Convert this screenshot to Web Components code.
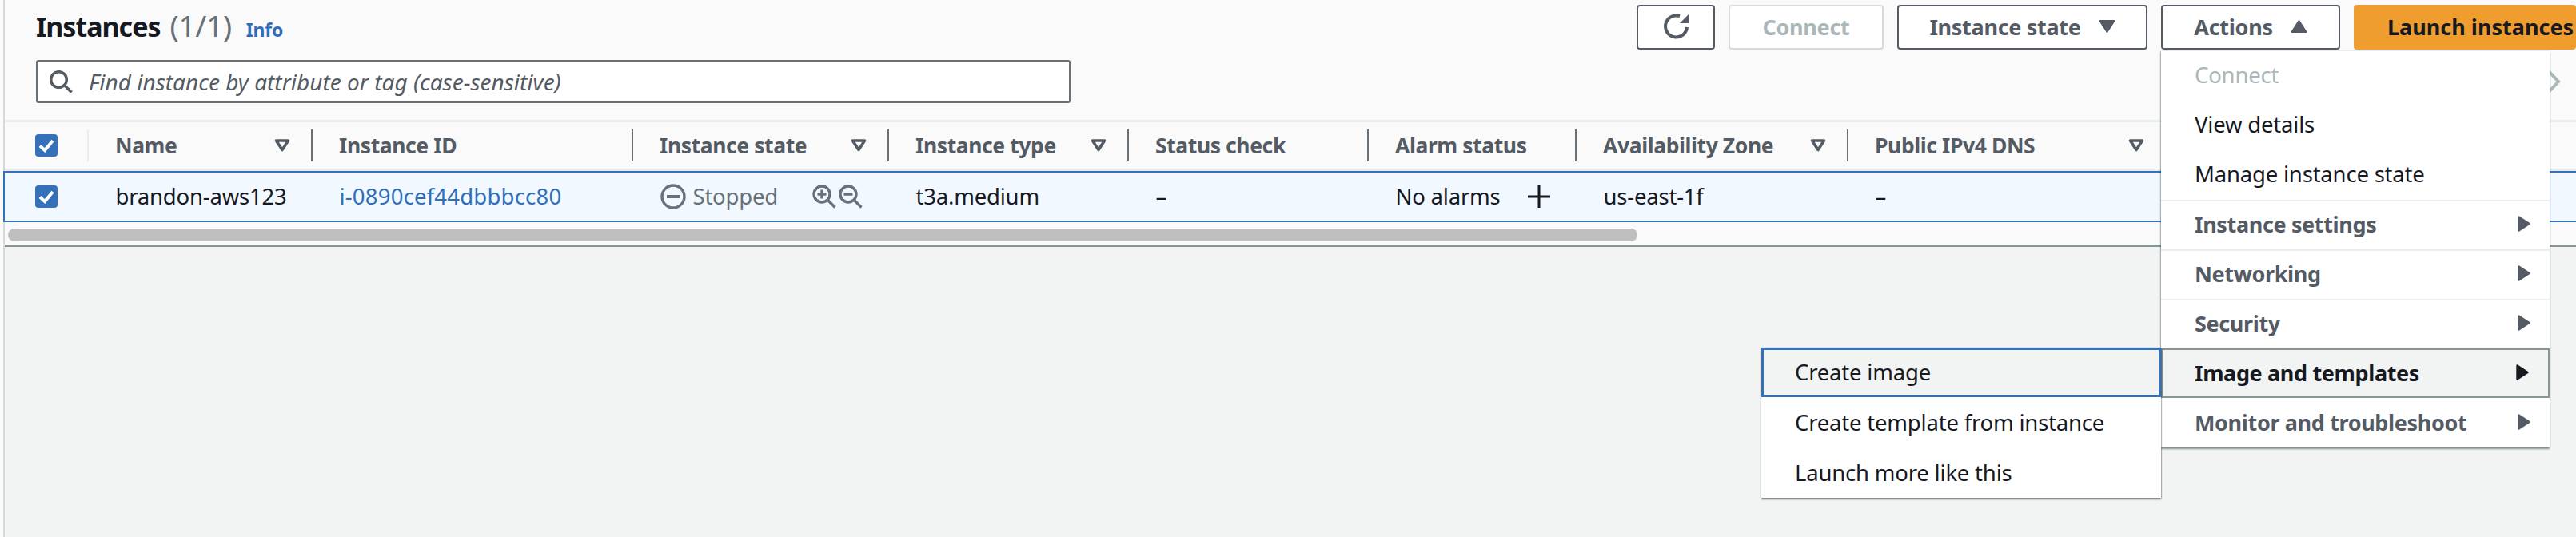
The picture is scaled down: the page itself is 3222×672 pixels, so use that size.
<!DOCTYPE html>
<html><head><meta charset="utf-8"><style>
html,body{margin:0;padding:0;width:3222px;height:672px;overflow:hidden;background:#f2f3f3;font-family:"Noto Sans",sans-serif;}
</style></head><body>
<aws-page></aws-page>
<script>
const FONT='"Noto Sans","Open Sans",sans-serif';
class Btn extends HTMLElement{constructor(){super();this.attachShadow({mode:'open'}).innerHTML=`<style>
:host{display:flex;align-items:center;justify-content:center;box-sizing:border-box;height:56px;padding-bottom:2px;border:2px solid #545b64;border-radius:4px;background:#fff;color:#545b64;font:700 27px/1 ${FONT};letter-spacing:-.3px;white-space:nowrap;gap:22px;flex:none}
:host([disabled]){border-color:#d5dbdb;color:#aab7b8}
:host([primary]){background:#f09d2f;border-color:#f09d2f;color:#16191f;justify-content:flex-start;padding-left:40px;letter-spacing:0}
</style><slot></slot>`}}
customElements.define('aws-btn',Btn);
class Check extends HTMLElement{constructor(){super();this.attachShadow({mode:'open'}).innerHTML=`<style>:host{display:block;width:28px;height:28px;flex:none}svg{display:block}</style>
<svg width="28" height="28" viewBox="0 0 28 28"><rect width="28" height="28" rx="4" fill="#3571b9"/><path d="M6 14.5l6 5.5L22 8" fill="none" stroke="#fff" stroke-width="4"/></svg>`}}
customElements.define('aws-check',Check);
class Head extends HTMLElement{constructor(){super();this.attachShadow({mode:'open'}).innerHTML=`<style>
:host{display:flex;align-items:center;box-sizing:border-box;height:40px;border-right:2px solid #687078;padding:0 26px 0 33px;color:#545b64;font:700 26.5px/40px ${FONT};letter-spacing:-.4px;white-space:nowrap;justify-content:space-between}
:host([last]){border-right:0}
svg{display:block;flex:none}
</style><slot></slot><svg id="s" width="20" height="16" viewBox="0 0 20 16"><path d="M2.5 2h15L10 13.5z" fill="none" stroke="#545b64" stroke-width="3.6" stroke-linejoin="round"/></svg>`;
if(this.hasAttribute('nosort'))this.shadowRoot.getElementById('s').remove()}}
customElements.define('aws-head',Head);
class Cell extends HTMLElement{constructor(){super();this.attachShadow({mode:'open'}).innerHTML=`<style>
:host{display:flex;align-items:center;padding-left:33.5px;color:#16191f;font:400 27.5px/40px ${FONT};letter-spacing:-.2px;white-space:nowrap;box-sizing:border-box}
:host([link]){color:#2f6fba;letter-spacing:.2px}
:host([muted]){color:#687078}
</style><slot></slot>`}}
customElements.define('aws-cell',Cell);
class Item extends HTMLElement{constructor(){super();this.attachShadow({mode:'open'}).innerHTML=`<style>
:host{display:flex;align-items:center;justify-content:space-between;box-sizing:border-box;height:62px;padding:0 24px 2px 42px;color:#16191f;font:400 27.5px/1 ${FONT};letter-spacing:-.2px;white-space:nowrap;border-top:2px solid transparent;border-bottom:2px solid transparent}
:host([disabled]){color:#aab7b8}
:host([sub]){color:#545b64;font:700 27px/1 ${FONT};letter-spacing:-.36px}
:host([div]){border-top-color:#eaeded}
:host([active]){color:#16191f;background:#f2f3f3;border:2px solid #879596;padding:0 24px 2px 40px}
:host([focus]){background:#f2f3f3;border:3px solid #3571b9;padding:0 24px 0 39px}
:host([tall]){height:63px;padding-bottom:0}
svg{display:none}
:host([sub]) svg{display:block}
path{fill:#545b64;stroke:#545b64}
:host([active]) path{fill:#16191f;stroke:#16191f}
</style><slot></slot><svg width="16" height="20" viewBox="0 0 16 20"><path d="M1.5 1.5L14.5 10 1.5 18.5z" stroke-width="2.4" stroke-linejoin="round"/></svg>`}}
customElements.define('aws-item',Item);
class Menu extends HTMLElement{constructor(){super();this.attachShadow({mode:'open'}).innerHTML=`<style>
:host{display:flex;flex-direction:column;position:absolute;box-sizing:border-box;background:#fff;box-shadow:0 2px 2px rgba(0,28,36,.45),1px 0 1px rgba(0,28,36,.2),-1px 0 1px rgba(0,28,36,.2)}
</style><slot></slot>`}}
customElements.define('aws-menu',Menu);
class Page extends HTMLElement{constructor(){super();this.attachShadow({mode:'open'}).innerHTML=`<style>
:host{display:flex;position:relative;width:3222px;height:672px;overflow:hidden;background:#f2f3f3;font-family:${FONT}}
.gutter{width:4px;flex:none;box-sizing:content-box;background:#fbfbfb;border-right:2px solid #d5dbdb}
.main{flex:1;min-width:0}
.panel{background:#fafafa;box-shadow:0 3px 0 #879596;height:306px;box-sizing:border-box;display:flex;flex-direction:column}
.top{display:flex;justify-content:space-between;height:153px;flex:none;box-sizing:border-box;border-bottom:3px solid #eaeded;padding:6px 0 0 39px;}
.left{display:flex;flex-direction:column;gap:10px;width:1294px;flex:none}
h1{margin:0;font:700 34px/50px ${FONT};letter-spacing:-1px;color:#16191f;display:flex;align-items:baseline;height:59px;padding-top:1px;box-sizing:border-box}
h1 span{font:400 37px/50px ${FONT};color:#687078;margin-left:12px;letter-spacing:-.2px}
h1 a{font:700 23px/1 ${FONT};letter-spacing:-.2px;color:#2f6fba;margin-left:18px}
.search{box-sizing:border-box;height:54px;border:2px solid #687078;border-radius:3px;background:#fff;display:flex;align-items:center;gap:20px;padding:0 0 0 15px;font:italic 400 28px/1 ${FONT};color:#545b64}
.actions{display:flex;gap:17px;width:1175px;flex:none;height:56px}
.headrow,.row{display:grid;grid-template-columns:105px 280px 401px 320px 300px 300px 260px 340px 396px 1fr}
.headrow{height:61px;flex:none;align-items:center;box-sizing:border-box;padding:9px 0 10px;border-bottom:2px solid #eaeded}
.row{height:64px;flex:none;box-sizing:border-box;background:#f1f8ff;border:solid #3571b9;border-width:2px 0 2px 2px;align-items:center;margin-left:-2px}
.c0{display:flex;align-items:center;padding-left:38px;height:40px;box-sizing:border-box;border-right:2px solid #eaeded}
.r0{display:flex;padding-left:38px}
.state{gap:9px;color:#687078}
.zoom{display:flex;gap:3px;margin-left:34px}
.plus{margin-left:33px;display:block}
.track{flex:1;padding:8px 0 0 4px;box-sizing:border-box}
.thumb{width:2038px;height:16px;border-radius:8px;background:#bfbfbf}
.chev{position:absolute;left:3183px;top:84px}
#m1{left:2703px;top:64px;width:486px}
#m2{left:2203px;top:435px;width:500px}
</style>
<div class="gutter"></div>
<div class="main">
<div class="panel">
 <div class="top">
  <div class="left">
   <h1>Instances <span>(1/1)</span><a>Info</a></h1>
   <div class="search"><svg width="29" height="28" viewBox="0 0 29 28" fill="none" stroke="#545b64" stroke-width="3.5"><circle cx="11.5" cy="11.5" r="9.8"/><path d="M18.5 18.5l9 9"/></svg><span>Find instance by attribute or tag (case-sensitive)</span></div>
  </div>
  <div class="actions">
   <aws-btn style="width:98px"><svg width="33" height="32" viewBox="0 0 33 32" fill="none" stroke="#545b64" stroke-width="4"><path d="M21 3.2A13.5 13.5 0 1 0 30 17"/><path d="M21 12h11V1z" fill="#545b64" stroke="none"/></svg></aws-btn>
   <aws-btn disabled style="width:194px">Connect</aws-btn>
   <aws-btn style="width:313px">Instance state <svg width="21" height="16" viewBox="0 0 21 16"><path d="M1.5 1h18L10.5 15z" fill="#545b64" stroke="#545b64" stroke-width="2" stroke-linejoin="round"/></svg></aws-btn>
   <aws-btn style="width:224px">Actions <svg width="21" height="16" viewBox="0 0 21 16"><path d="M1.5 15h18L10.5 1z" fill="#545b64" stroke="#545b64" stroke-width="2" stroke-linejoin="round"/></svg></aws-btn>
   <aws-btn primary style="width:278px">Launch instances</aws-btn>
  </div>
 </div>
 <div class="headrow">
  <div class="c0"><aws-check></aws-check></div>
  <aws-head>Name</aws-head><aws-head nosort>Instance ID</aws-head>
  <aws-head>Instance state</aws-head><aws-head>Instance type</aws-head>
  <aws-head nosort>Status check</aws-head><aws-head nosort>Alarm status</aws-head>
  <aws-head>Availability Zone</aws-head><aws-head last>Public IPv4 DNS</aws-head>
 </div>
 <div class="row">
  <div class="r0"><aws-check></aws-check></div>
  <aws-cell>brandon-aws123</aws-cell>
  <aws-cell link>i-0890cef44dbbbcc80</aws-cell>
  <aws-cell muted class="state"><svg width="32" height="32" viewBox="0 0 32 32" fill="none" stroke="#687078" stroke-width="3.4"><circle cx="16" cy="16" r="14"/><path d="M8 16h16" stroke-width="4"/></svg>Stopped
    <div class="zoom">
    <svg width="30" height="30" viewBox="0 0 30 30" fill="none" stroke="#687078" stroke-width="3.4"><circle cx="12" cy="12" r="10"/><path d="M6.5 12h11M12 6.5v11M19.5 19.5l9 9"/></svg>
    <svg width="30" height="30" viewBox="0 0 30 30" fill="none" stroke="#687078" stroke-width="3.4"><circle cx="12" cy="12" r="10"/><path d="M6.5 12h11M19.5 19.5l9 9"/></svg>
    </div></aws-cell>
  <aws-cell>t3a.medium</aws-cell>
  <aws-cell>–</aws-cell>
  <aws-cell>No alarms<svg class="plus" width="30" height="30" viewBox="0 0 30 30"><path d="M1 15h28M15 1v28" stroke="#16191f" stroke-width="3"/></svg></aws-cell>
  <aws-cell>us-east-1f</aws-cell>
  <aws-cell>–</aws-cell>
 </div>
 <div class="track"><div class="thumb"></div></div>
</div>
</div>
<svg class="chev" width="22" height="36" viewBox="0 0 22 36" fill="none" stroke="#aab7b8" stroke-width="4"><path d="M3 3l14 15L3 33"/></svg>
<aws-menu id="m1">
 <aws-item disabled>Connect</aws-item>
 <aws-item>View details</aws-item>
 <aws-item>Manage instance state</aws-item>
 <aws-item sub div>Instance settings</aws-item>
 <aws-item sub div>Networking</aws-item>
 <aws-item sub div>Security</aws-item>
 <aws-item sub active>Image and templates</aws-item>
 <aws-item sub>Monitor and troubleshoot</aws-item>
</aws-menu>
<aws-menu id="m2">
 <aws-item focus>Create image</aws-item>
 <aws-item tall>Create template from instance</aws-item>
 <aws-item tall>Launch more like this</aws-item>
</aws-menu>`}}
customElements.define('aws-page',Page);
</script>
</body></html>
